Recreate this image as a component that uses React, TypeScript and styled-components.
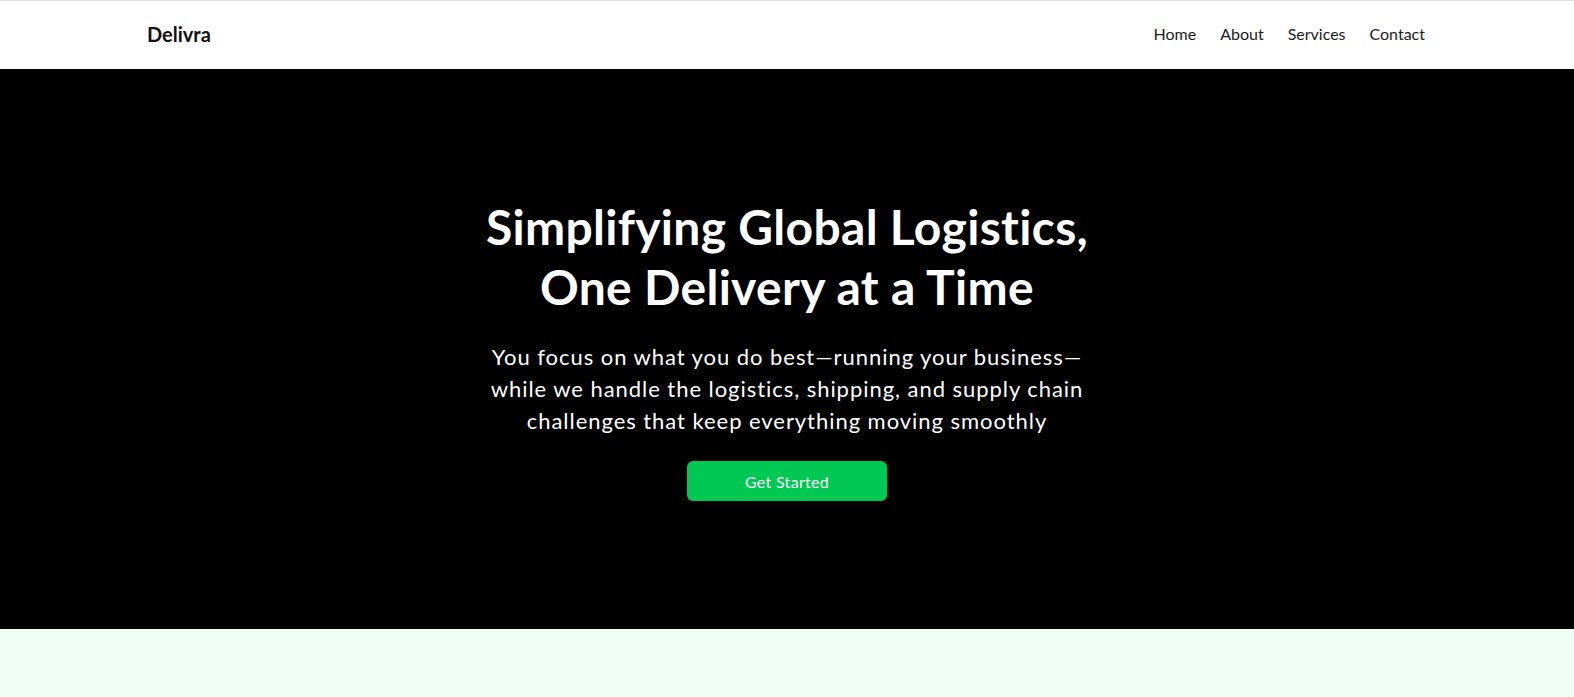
import React from "react";
import styled, { createGlobalStyle } from "styled-components";

const GlobalStyle = createGlobalStyle`
  * { box-sizing: border-box; }
  html, body { margin: 0; padding: 0; }
  body {
    font-family: "Lato", "Noto Sans", sans-serif;
    font-variant-ligatures: none;
    background: #effdf4;
    color: #000;
  }
`;

const Header = styled.header`
  height: 69px;
  background: #ffffff;
  border-top: 1px solid #e3e3e3;
  display: flex;
  justify-content: center;
`;

const HeaderInner = styled.div`
  width: 100%;
  max-width: 1280px;
  padding: 0 2px 3px 0;
  display: flex;
  align-items: center;
  justify-content: space-between;
`;

const Logo = styled.div`
  font-size: 20px;
  font-weight: 700;
  color: #111;
`;

const Nav = styled.nav`
  display: flex;
  gap: 24px;
`;

const NavLink = styled.a`
  font-size: 16px;
  color: #1c1c1c;
  text-decoration: none;
  cursor: pointer;
`;

const Hero = styled.section`
  height: 560px;
  background: #000;
  display: flex;
  flex-direction: column;
  align-items: center;
  justify-content: center;
  text-align: center;
  color: #fff;
`;

const Title = styled.h1`
  margin: 0;
  font-size: 48px;
  line-height: 60px;
  font-weight: 700;
  letter-spacing: 0.3px;
`;

const Lead = styled.p`
  margin: 24px 0 0;
  font-size: 22px;
  line-height: 32px;
  font-weight: 400;
  letter-spacing: 0.95px;
`;

const CTA = styled.button`
  margin-top: 24px;
  width: 200px;
  height: 40px;
  border: none;
  border-radius: 6px;
  background: #00c853;
  color: #fff;
  font-family: inherit;
  font-size: 16px;
  letter-spacing: 0.3px;
  cursor: pointer;
`;

const Below = styled.section`
  min-height: 68px;
  background: #effdf4;
`;

export default function App() {
  return (
    <>
      <GlobalStyle />
      <Header>
        <HeaderInner>
          <Logo>Delivra</Logo>
          <Nav>
            <NavLink>Home</NavLink>
            <NavLink>About</NavLink>
            <NavLink>Services</NavLink>
            <NavLink>Contact</NavLink>
          </Nav>
        </HeaderInner>
      </Header>
      <Hero>
        <Title>
          Simplifying Global Logistics,
          <br />
          One Delivery at a Time
        </Title>
        <Lead>
          You focus on what you do best—running your business—
          <br />
          while we handle the logistics, shipping, and supply chain
          <br />
          challenges that keep everything moving smoothly
        </Lead>
        <CTA>Get Started</CTA>
      </Hero>
      <Below />
    </>
  );
}
